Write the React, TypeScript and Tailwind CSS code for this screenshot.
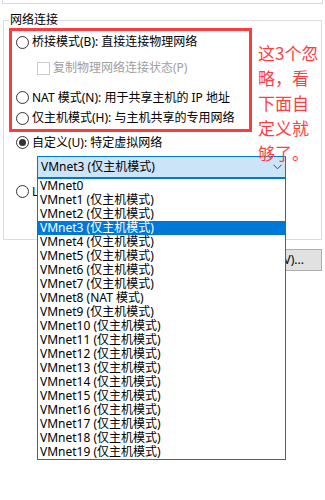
import React from "react";

const FONT = "'Noto Sans', 'Noto Sans CJK SC', sans-serif";

function Radio({ checked = false }: { checked?: boolean }) {
  return (
    <span className="w-[13px] h-[13px] rounded-full border border-[#333333] bg-white flex items-center justify-center shrink-0">
      {checked && <span className="w-[7px] h-[7px] rounded-full bg-[#333333]" />}
    </span>
  );
}

const items = [
  "VMnet0",
  "VMnet1 (仅主机模式)",
  "VMnet2 (仅主机模式)",
  "VMnet3 (仅主机模式)",
  "VMnet4 (仅主机模式)",
  "VMnet5 (仅主机模式)",
  "VMnet6 (仅主机模式)",
  "VMnet7 (仅主机模式)",
  "VMnet8 (NAT 模式)",
  "VMnet9 (仅主机模式)",
  "VMnet10 (仅主机模式)",
  "VMnet11 (仅主机模式)",
  "VMnet12 (仅主机模式)",
  "VMnet13 (仅主机模式)",
  "VMnet14 (仅主机模式)",
  "VMnet15 (仅主机模式)",
  "VMnet16 (仅主机模式)",
  "VMnet17 (仅主机模式)",
  "VMnet18 (仅主机模式)",
  "VMnet19 (仅主机模式)",
];

export default function App() {
  return (
    <div
      className="w-[325px] h-[500px] bg-white relative overflow-hidden text-[12px] text-black"
      style={{ fontFamily: FONT }}
    >
      {/* bottom of previous box */}
      <div className="ml-[2px] w-[321px] h-[4px] border border-t-0 border-[#dadada]" />

      {/* group box */}
      <div className="ml-[3px] mt-[16px] w-[319px] h-[220px] border border-[#dcdcdc]">
        <div className="ml-[5px] -mt-[8px] h-[14px] leading-[14px] w-fit bg-white px-[1px]">网络连接</div>

        <div className="flex items-start h-[105px]">
          <div className="ml-[5px] mt-[1px] w-[243px] h-[104px] shrink-0 border-[3px] border-[#fa3c3c] flex flex-col">
            <div className="h-[22px] flex items-center pl-[4px] gap-[3px] leading-[14px] whitespace-nowrap">
              <Radio />
              <span>桥接模式(B): 直接连接物理网络</span>
            </div>
            <div className="h-[30px] flex items-center pl-[25px] gap-[3px] leading-[14px] whitespace-nowrap text-[#a0a0a0]">
              <span className="w-[13px] h-[13px] border border-[#cccccc] bg-white shrink-0" />
              <span>复制物理网络连接状态(P)</span>
            </div>
            <div className="mt-[4px] h-[21px] flex items-center pl-[4px] gap-[3px] leading-[14px] whitespace-nowrap">
              <Radio />
              <span>NAT 模式(N): 用于共享主机的 IP 地址</span>
            </div>
            <div className="h-[20px] flex items-center pl-[4px] gap-[3px] leading-[14px] whitespace-nowrap">
              <Radio />
              <span>仅主机模式(H): 与主机共享的专用网络</span>
            </div>
          </div>
          <div
            className="ml-[6px] mt-[13px] text-[17px] leading-[25px] text-[#ff3f3f] whitespace-nowrap"
            style={{ fontFamily: "'Noto Sans CJK SC', sans-serif" }}
          >
            这3个忽<br />略，看<br />下面自<br />定义就<br />够了。
          </div>
        </div>

        <div className="h-[21px] flex items-center pl-[12px] gap-[3px] leading-[14px] whitespace-nowrap">
          <Radio checked />
          <span>自定义(U): 特定虚拟网络</span>
        </div>

        <div className="mt-[3px] ml-[33px] w-[249px] h-[22px] border border-[#0078d7] bg-[#cce4f7] flex items-center justify-between pl-[3px] pr-[3px] leading-[14px] whitespace-nowrap">
          <span>VMnet3 (仅主机模式)</span>
          <svg width="9" height="6" viewBox="0 0 9 6">
            <path d="M0.5 0.8 L4.5 4.8 L8.5 0.8" fill="none" stroke="#444444" strokeWidth="1" />
          </svg>
        </div>

        <div className="mt-[3px] h-[21px] flex items-center pl-[12px] gap-[3px] leading-[14px] whitespace-nowrap">
          <Radio />
          <span>LAN 区段(L):</span>
        </div>

        <div className="mt-[3px] ml-[33px] w-[249px] h-[22px] border border-[#adadad] bg-[#e1e1e1]" />
      </div>

      {/* buttons */}
      <div className="mt-[9px] w-[322px] flex justify-end gap-[6px]">
        <div className="w-[96px] h-[22px] border border-[#adadad] bg-[#e1e1e1]" />
        <div className="w-[84px] h-[22px] border border-[#adadad] bg-[#e1e1e1] flex items-center justify-center leading-[14px] whitespace-nowrap">
          高级(V)...
        </div>
      </div>

      {/* dropdown list overlay */}
      <div className="absolute left-[37px] top-[178px] w-[249px] h-[282px] border border-[#0078d7] bg-white z-10 flex flex-col">
        {items.map((t, i) => (
          <div
            key={t}
            className={
              i === 3
                ? "h-[14px] leading-[14px] pl-[2px] whitespace-nowrap bg-[#0078d7] text-white"
                : "h-[14px] leading-[14px] pl-[2px] whitespace-nowrap text-black"
            }
          >
            {t}
          </div>
        ))}
      </div>
    </div>
  );
}
